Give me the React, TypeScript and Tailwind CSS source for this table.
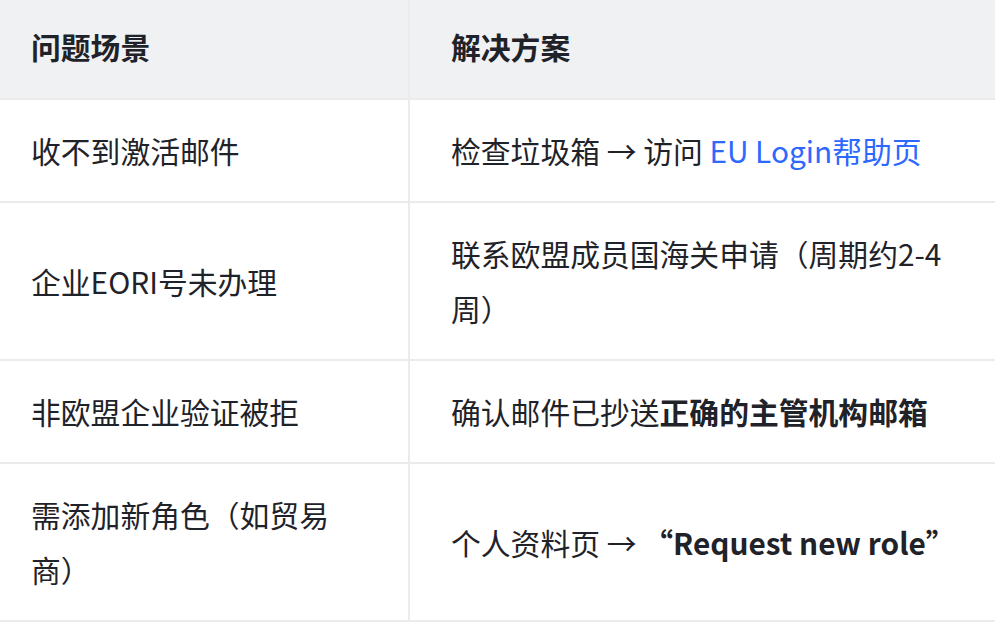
const font = "font-['Noto_Sans_CJK_SC','Noto_Sans',sans-serif]";

const rows: { problem: React.ReactNode; fix: React.ReactNode }[] = [
  {
    problem: "收不到激活邮件",
    fix: (
      <>
        检查垃圾箱 → 访问 <a className="text-[#2d68ff]">EU Login帮助页</a>
      </>
    ),
  },
  {
    problem: "企业EORI号未办理",
    fix: "联系欧盟成员国海关申请（周期约2-4周）",
  },
  {
    problem: "非欧盟企业验证被拒",
    fix: (
      <>
        确认邮件已抄送<strong className="font-bold">正确的主管机构邮箱</strong>
      </>
    ),
  },
  {
    problem: "需添加新角色（如贸易商）",
    fix: (
      <>
        个人资料页 → <strong className="font-bold">“Request new role”</strong>
      </>
    ),
  },
];

export default function App() {
  return (
    <div className={`h-[627px] w-[995px] overflow-hidden bg-white text-[29.8px] leading-[55px] text-[#1f2329] ${font}`}>
      <table className="w-full table-fixed border-collapse">
        <colgroup>
          <col className="w-[409px]" />
          <col />
        </colgroup>
        <thead>
          <tr className="bg-[#f0f1f3]">
            <th className="border-b-2 border-r-2 border-[#ebebeb] pt-[19px] pb-[24px] pl-[31px] pr-[50px] text-left font-bold">
              问题场景
            </th>
            <th className="border-b-2 border-[#ebebeb] pt-[19px] pb-[24px] pl-[41px] pr-[30px] text-left font-bold">
              解决方案
            </th>
          </tr>
        </thead>
        <tbody>
          {rows.map((r, i) => (
            <tr key={i}>
              <td className="border-b-2 border-r-2 border-[#ebebeb] py-[23px] pl-[31px] pr-[50px] align-middle">
                {r.problem}
              </td>
              <td className="border-b-2 border-[#ebebeb] py-[23px] pl-[41px] pr-[30px] align-middle">
                {r.fix}
              </td>
            </tr>
          ))}
        </tbody>
      </table>
    </div>
  );
}
